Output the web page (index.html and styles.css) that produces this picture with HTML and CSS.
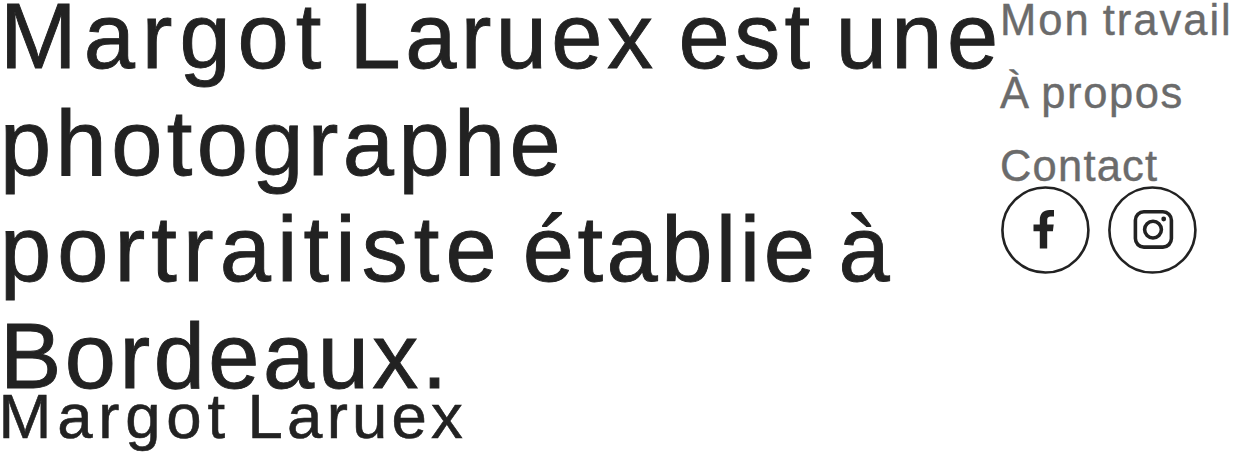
FILE: index.html
```html
<!DOCTYPE html>
<html lang="fr">
<head>
<meta charset="utf-8">
<title>Margot Laruex</title>
<link rel="stylesheet" href="styles.css">
</head>
<body>
<main class="page">
  <section class="intro">
    <h1 class="headline">
      <span class="line line-first"><span class="track-xl">Margot</span> <span class="track-m">Laruex</span> <span class="track-m">est</span> <span class="track-m">une</span></span>
      <span class="line track-m">photographe</span>
      <span class="line"><span class="track-l">portraitiste</span> <span class="track-s">établie</span> à</span>
      <span class="line track-s">Bordeaux.</span>
    </h1>
    <p class="signature"><span class="track-l">Margot</span> <span class="track-m">Laruex</span></p>
  </section>
  <aside class="side">
    <nav class="menu">
      <a class="menu-link">Mon travail</a>
      <a class="menu-link menu-link-about">À propos</a>
      <a class="menu-link menu-link-contact">Contact</a>
    </nav>
    <div class="social">
      <a class="social-link" aria-label="Facebook">
        <svg class="icon" viewBox="0 0 90 88"><ellipse class="ring" cx="45.4" cy="44" rx="43" ry="42.500"/><path d="M39.800 62.500V45.200h-6.300v-6.700h6.300V34c0-6.500 3.700-10 9.700-10H54v6.500h-3.300c-2.500 0-3.500 1.200-3.500 3.500v4.500h6.500l-.8 6.700h-5.700v17.300z"/></svg>
      </a>
      <a class="social-link" aria-label="Instagram">
        <svg class="icon" viewBox="0 0 90 88"><ellipse class="ring" cx="45.4" cy="44" rx="43" ry="42.500"/><rect class="camera" x="28.400" y="25.700" width="36" height="35.400" rx="8.500"/><circle class="camera" cx="46" cy="43.600" r="8.400"/><circle cx="56.700" cy="33" r="2.400"/></svg>
      </a>
    </div>
  </aside>
</main>
</body>
</html>
```
FILE: styles.css
```css
body { margin: 0; background: #fff; color: #222; font-family: "Liberation Sans", Arial, sans-serif; }
.page { display: flex; width: 1234px; height: 454px; overflow: hidden; }
.intro { width: 1000px; flex: none; }
.headline { margin: -17px 0 0; height: 405.500px; font-size: 92px; font-weight: 400; line-height: 106.67px; word-spacing: -5.500px; -webkit-text-stroke: 0.9px #222; }
.line { display: block; white-space: nowrap; }
.line-first { word-spacing: -4.300px; }
.track-s { letter-spacing: 3.500px; }
.track-m { letter-spacing: 4.400px; }
.track-l { letter-spacing: 6.100px; }
.track-xl { letter-spacing: 7px; }
.signature { margin: 0 0 0 -1.500px; font-size: 63.500px; line-height: 54px; word-spacing: -1px; white-space: nowrap; -webkit-text-stroke: 0.6px #222; }
.signature .track-l { letter-spacing: 5.800px; }
.signature .track-m { letter-spacing: 4.200px; }
.side { width: 234px; flex: none; }
.menu { display: flex; flex-direction: column; height: 202px; margin-top: -16px; }
.menu-link { color: #6b6b6b; font-size: 43.500px; line-height: 73px; letter-spacing: 2px; word-spacing: -2px; white-space: nowrap; -webkit-text-stroke: 0.4px #6b6b6b; }
.menu-link-about { letter-spacing: 1.600px; word-spacing: -3px; }
.menu-link-contact { letter-spacing: 1.200px; }
.social { display: flex; gap: 17px; }
.social-link { display: block; width: 90px; height: 88px; }
.icon { display: block; width: 90px; height: 88px; fill: #222; }
.ring { fill: none; stroke: #222; stroke-width: 2.6; }
.camera { fill: none; stroke: #222; stroke-width: 3.600; }
```
